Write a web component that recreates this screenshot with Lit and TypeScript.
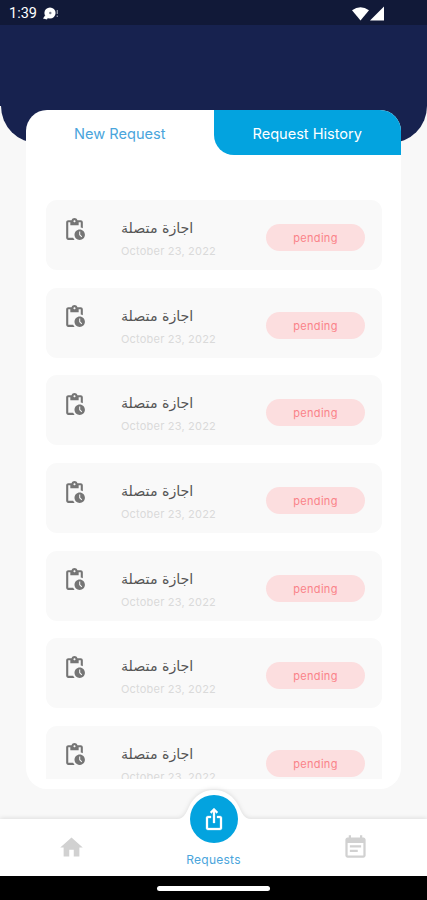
import { LitElement, html, css } from "lit";
import { customElement, property } from "lit/decorators.js";

@customElement("request-row")
class RequestRow extends LitElement {
  @property() name = "";
  @property() date = "";
  @property() status = "";

  static styles = css`
    :host { display: block; flex: none; }
    .row { box-sizing: border-box; height: 70px; border-radius: 11px; background: #f9f9f9; display: flex; align-items: flex-start; padding: 0 17px 0 16px; }
    .icon { width: 25px; height: 25px; margin-top: 16.6px; fill: #757575; flex: none; }
    .info { flex: 1; margin-left: 34px; padding-top: 16px; }
    .name { height: 24px; font: 14.2px/24px "DejaVu Sans", sans-serif; color: #555; white-space: nowrap; }
    .date { font: 11px/14px Inter, sans-serif; letter-spacing: 0.2px; color: #dadada; margin-top: 4px; white-space: nowrap; }
    .pill { flex: none; width: 99px; height: 27px; margin-top: 24px; border-radius: 14px; background: #fcdedf; color: #fa8389; font: 11px/28px Inter, sans-serif; letter-spacing: 0.3px; text-align: center; }
  `;

  render() {
    return html`<div class="row">
      <svg class="icon" viewBox="0 0 24 24"><path d="M17 12c-2.76 0-5 2.24-5 5s2.24 5 5 5 5-2.24 5-5-2.24-5-5-5zm1.65 7.35L16.5 17.2V14h1v2.79l1.85 1.85-.7.71zM18 3h-3.18C14.4 1.84 13.3 1 12 1s-2.4.84-2.82 2H6c-1.1 0-2 .9-2 2v15c0 1.1.9 2 2 2h6.11c-.59-.57-1.07-1.25-1.42-2H6V5h2v3h8V5h2v5.08c.71.1 1.38.31 2 .6V5c0-1.1-.9-2-2-2zm-6 2c-.55 0-1-.45-1-1s.45-1 1-1 1 .45 1 1-.45 1-1 1z"/></svg>
      <div class="info">
        <div class="name"><span>${this.name}</span></div>
        <div class="date">${this.date}</div>
      </div>
      <div class="pill">${this.status}</div>
    </div>`;
  }
}

@customElement("app-root")
class AppRoot extends LitElement {
  private requests = Array.from({ length: 7 }, () => ({
    name: "اجازة متصلة",
    date: "October 23, 2022",
    status: "pending",
  }));

  static styles = css`
    :host { display: block; }
    .screen { width: 427px; height: 900px; overflow: hidden; background: #f8f8f8; display: flex; flex-direction: column; position: relative; font-family: Inter, sans-serif; }
    .backdrop { position: absolute; top: 0; left: 1px; right: 0; height: 143px; background: #17224f; border-radius: 0 0 37px 37px; }
    .corner { position: absolute; top: 0; left: 0; width: 2px; height: 106px; background: #17224f; }
    .status { position: relative; height: 25px; flex: none; background: #111938; display: flex; align-items: center; padding: 2px 42px 0 9px; box-sizing: border-box; color: #fff; }
    .time { font: 400 14.5px/22px Roboto, sans-serif; width: 34px; white-space: nowrap; padding-top: 1px; }
    .debug { width: 16px; height: 14px; }
    .signals { margin-left: auto; width: 33px; height: 16px; }
    .card { position: relative; margin: 85px 26px 0; width: 375px; height: 679px; flex: none; background: #fff; border-radius: 21px; overflow: hidden; }
    .tabs { display: flex; height: 45.4px; }
    .tab { flex: 1; text-align: center; font-size: 14.6px; line-height: 48px; white-space: nowrap; color: #4aa5dc; letter-spacing: 0; }
    .tab.active { background: #03a3df; color: #fff; border-bottom-left-radius: 20px; letter-spacing: -0.02px; }
    .list { margin: 44.6px 19px 0 20px; height: 579px; overflow: hidden; display: flex; flex-direction: column; gap: 17.65px; }
    .nav { position: absolute; left: 0; top: 780px; width: 427px; height: 96px; }
    .shape { position: absolute; inset: 0; overflow: visible; filter: drop-shadow(0 -1px 2px rgba(0,0,0,.1)); }
    .items { position: relative; height: 100%; display: grid; grid-template-columns: 1fr 1fr 1fr; justify-items: center; }
    .item { fill: #d1d1d1; width: 27px; height: 27px; margin-top: 53.5px; }
    .current { display: flex; flex-direction: column; align-items: center; padding-top: 15px; }
    .fab { width: 48px; height: 48px; border-radius: 50%; background: #03a3df; display: grid; place-items: center; margin-left: 1px; }
    .fab svg { width: 24px; height: 24px; }
    .label { font-size: 12px; line-height: 16px; margin-top: 9px; color: #4aa5dc; letter-spacing: 0.25px; }
    .system { margin-top: auto; height: 24px; background: #000; display: grid; place-items: center; position: relative; }
    .handle { width: 113px; height: 5px; border-radius: 3px; background: #fff; }
  `;

  render() {
    return html`<div class="screen">
      <div class="backdrop"></div>
      <div class="corner"></div>
      <div class="status">
        <span class="time">1:39</span>
        <svg class="debug" viewBox="0 0 16 14"><circle cx="7" cy="6" r="5.6" fill="#fff"/><path d="M0 11.5l2-3 3 2-1 2z" fill="#fff"/><circle cx="7.3" cy="6" r="1.2" fill="#7d8290"/><path d="M14.3 3v4M14.3 8.5v1.5" stroke="#8b90a0" stroke-width="1.3"/></svg>
        <svg class="signals" viewBox="0 0 33 16" fill="#fff"><path d="M0 4.2Q8.5-1.8 17 4.2L8.5 14.5z"/><path d="M32 .5v14H18z"/></svg>
      </div>
      <main class="card">
        <div class="tabs">
          <div class="tab">New Request</div>
          <div class="tab active">Request History</div>
        </div>
        <div class="list">
          ${this.requests.map((r) => html`<request-row .name=${r.name} .date=${r.date} .status=${r.status}></request-row>`)}
        </div>
      </main>
      <nav class="nav">
        <svg class="shape" width="427" height="96" viewBox="0 0 427 96"><path fill="#fff" d="M0 39H177C184 39 186 33 189 27C194 16 203 10 214 10C225 10 234 16 239 27C242 33 244 39 251 39H427V96H0z"/></svg>
        <div class="items">
          <svg class="item" viewBox="0 0 24 24"><path d="M10 20v-6h4v6h5v-8h3L12 3 2 12h3v8z"/></svg>
          <div class="current">
            <div class="fab"><svg viewBox="0 0 24 24" fill="#fff" stroke="#fff" stroke-width=".3"><path d="M16 5l-1.42 1.42-1.59-1.59V16h-1.98V4.83L9.42 6.42 8 5l4-4 4 4zm4 6v10c0 1.1-.9 2-2 2H6c-1.11 0-2-.9-2-2V11c0-1.11.89-2 2-2h3v2H6v10h12V11h-3V9h3c1.1 0 2 .89 2 2z"/></svg></div>
            <span class="label">Requests</span>
          </div>
          <svg class="item" viewBox="0 0 24 24"><path d="M17 10H7v2h10v-2zm2-7h-1V1h-2v2H8V1H6v2H5c-1.11 0-1.99.9-1.99 2L3 19c0 1.1.89 2 2 2h14c1.1 0 2-.9 2-2V5c0-1.1-.9-2-2-2zm0 16H5V8h14v11zm-5-5H7v2h7v-2z"/></svg>
        </div>
      </nav>
      <div class="system"><div class="handle"></div></div>
    </div>`;
  }
}
